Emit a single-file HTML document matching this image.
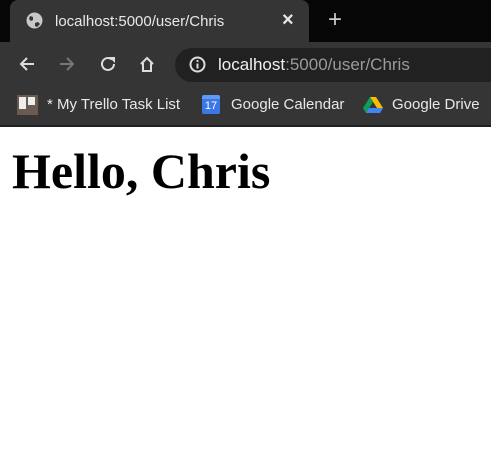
<!DOCTYPE html>
<html><head><style>
*{margin:0;padding:0;box-sizing:border-box}
body{width:491px;height:451px;overflow:hidden;background:#fff;font-family:"Liberation Sans",sans-serif;position:relative}
.tabs{position:absolute;left:0;top:0;width:491px;height:42px;background:#060606}
.tab{position:absolute;left:10px;top:0;width:299px;height:42px;background:#353535;border-radius:8px 8px 0 0}
.tb{position:absolute;left:0;top:42px;width:491px;height:46px;background:#353535}
.bm{position:absolute;left:0;top:88px;width:491px;height:39px;background:#353535;border-bottom:2px solid #202020}
.t{position:absolute;color:#e8e8e8;font-size:15px;white-space:nowrap}
.url{position:absolute;left:175px;top:48px;width:330px;height:34px;background:#212121;border-radius:17px}
h1{position:absolute;left:12px;top:141px;font-family:"Liberation Serif",serif;font-size:50px;font-weight:bold;color:#000;line-height:60px;white-space:nowrap}
</style></head><body>
<div class="tabs"><div class="tab"></div></div>
<svg style="position:absolute;left:26px;top:12px" width="17" height="17" viewBox="0 0 17 17"><circle cx="8.5" cy="8.5" r="8" fill="#c8c8c8"/><path d="M4 4l3 1 0 3-2 1-2-2zM9 11l3-1 2 2-3 3-2-1z" fill="#353535"/></svg>
<div class="t" style="left:55px;top:13px;font-size:15px">localhost:5000/user/Chris</div>
<div class="t" style="left:282px;top:9px;font-size:20px;font-weight:bold">×</div>
<div class="t" style="left:328px;top:6px;font-size:24px;color:#ccc">+</div>
<div class="tb"></div>
<svg style="position:absolute;left:18px;top:56px" width="18" height="16" viewBox="0 0 18 16"><path d="M16 8H3M9 2L3 8l6 6" stroke="#ddd" stroke-width="2" fill="none"/></svg>
<svg style="position:absolute;left:58px;top:56px" width="18" height="16" viewBox="0 0 18 16"><path d="M2 8h13M9 2l6 6-6 6" stroke="#777" stroke-width="2" fill="none"/></svg>
<svg style="position:absolute;left:99px;top:55px" width="18" height="18" viewBox="0 0 18 18"><path d="M15 9a6 6 0 1 1-2-4.5" stroke="#ddd" stroke-width="2" fill="none"/><path d="M10 2h6v6z" fill="#ddd"/></svg>
<svg style="position:absolute;left:138px;top:55px" width="18" height="18" viewBox="0 0 18 18"><path d="M3 9L9 3l6 6M5 8v8h8V8" stroke="#ddd" stroke-width="2" fill="none"/></svg>
<div class="url"></div>
<svg style="position:absolute;left:189px;top:56px" width="17" height="17" viewBox="0 0 17 17"><circle cx="8.5" cy="8.5" r="7" stroke="#ddd" stroke-width="2" fill="none"/><path d="M8.5 7.5v5" stroke="#ddd" stroke-width="2"/><circle cx="8.5" cy="5" r="1.1" fill="#ddd"/></svg>
<div class="t" style="left:218px;top:55px;font-size:17px;color:#f0f0f0">localhost<span style="color:#9a9a9a">:5000/user/Chris</span></div>
<div class="bm"></div>
<div style="position:absolute;left:17px;top:95px;width:21px;height:20px;background:#6a5a50"><div style="position:absolute;left:2px;top:2px;width:7px;height:12px;background:#eee"></div><div style="position:absolute;left:11px;top:2px;width:7px;height:8px;background:#eee"></div></div>
<div class="t" style="left:47px;top:96px">* My Trello Task List</div>
<div style="position:absolute;left:202px;top:95px;width:18px;height:19px;background:#3b78e7;border-radius:2px;border-top:4px solid #5f9af5;color:#fff;font-size:11px;text-align:center;line-height:15px">17</div>
<div class="t" style="left:231px;top:96px">Google Calendar</div>
<svg style="position:absolute;left:363px;top:97px" width="20" height="16" viewBox="0 0 20 16"><path d="M7 0h6l7 11h-6z" fill="#fbbc04"/><path d="M7 0l3 5-7 11-3-5z" fill="#0f9d58"/><path d="M3 16l3-5h14l-3 5z" fill="#4285f4"/></svg>
<div class="t" style="left:392px;top:96px">Google Drive</div>
<h1>Hello, Chris</h1>
</body></html>
